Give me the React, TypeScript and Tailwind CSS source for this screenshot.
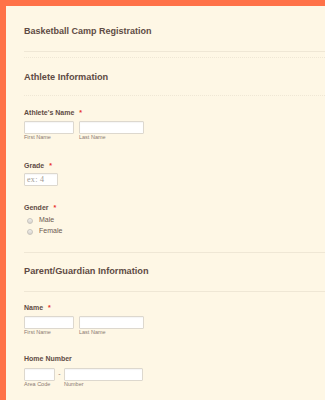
import React from "react";

const font = { fontFamily: '"Liberation Sans", Arial, sans-serif' };

function Req() {
  return <span className="ml-[5px] text-[7px] text-[#e8322a]">*</span>;
}

function Label({ text, required }: { text: string; required?: boolean }) {
  return (
    <div className="flex items-start text-[7px] leading-[9px] font-bold text-[#5e4b44]">
      {text}
      {required && <Req />}
    </div>
  );
}

function Field({ width, placeholder }: { width: string; placeholder?: string }) {
  return (
    <div
      className={`${width} h-[13px] bg-white border border-[#ddd8ce] rounded-[1px] shadow-[inset_0_1px_1px_rgba(0,0,0,0.04)] flex items-center pl-[2px] text-[8px] tracking-[0.3px] text-[#a29b93]`}
      style={{ fontFamily: '"Liberation Serif", serif' }}
    >
      {placeholder}
    </div>
  );
}

function Sub({ children, width }: { children: string; width: string }) {
  return <div className={`${width} text-[5.5px] leading-[7px] text-[#8c7b72]`}>{children}</div>;
}

function NamePair() {
  return (
    <div className="mt-[4px]">
      <div className="flex gap-[5px]">
        <Field width="w-[50px]" />
        <Field width="w-[65px]" />
      </div>
      <div className="flex gap-[5px]">
        <Sub width="w-[50px]">First Name</Sub>
        <Sub width="w-[65px]">Last Name</Sub>
      </div>
    </div>
  );
}

function Radio({ label }: { label: string }) {
  return (
    <div className="h-[11px] flex items-center">
      <span className="ml-[3px] w-[6px] h-[6px] rounded-full border border-[#c9c5be] bg-gradient-to-b from-[#f2f0ec] to-[#d6d3ce]" />
      <span className="ml-[6px] text-[7px] text-[#6b5750]">{label}</span>
    </div>
  );
}

export default function App() {
  return (
    <div className="min-h-[400px] bg-[#ff7248] pt-[6px] pl-[6px]" style={font}>
      <div className="min-h-[394px] bg-[#fef7e5] pl-[18px]">
        <div className="pt-[20px] pb-[14px] border-b border-[#efe7d5]">
          <div className="text-[9px] leading-[11px] font-bold text-[#5e4b44]">Basketball Camp Registration</div>
        </div>
        <div className="mt-[5px] border-t border-dotted border-[#efe7d5] pt-[13px] pb-[12px] border-b">
          <div className="text-[9.2px] leading-[12px] font-bold text-[#5e4b44]">Athlete Information</div>
        </div>

        <div className="pt-[12px]">
          <Label text="Athlete's Name" required />
          <NamePair />
        </div>

        <div className="mt-[20px]">
          <Label text="Grade" required />
          <div className="mt-[3px]">
            <Field width="w-[34px]" placeholder="ex: 4" />
          </div>
        </div>

        <div className="mt-[17px] pb-[15px] border-b border-[#efe7d5]">
          <Label text="Gender" required />
          <div className="mt-[3px]">
            <Radio label="Male" />
            <Radio label="Female" />
          </div>
        </div>

        <div className="pt-[12px] pb-[14px] border-b border-[#efe7d5]">
          <div className="text-[9.2px] leading-[12px] font-bold text-[#5e4b44]">Parent/Guardian Information</div>
        </div>

        <div className="pt-[11px]">
          <Label text="Name" required />
          <NamePair />
        </div>

        <div className="mt-[18px]">
          <Label text="Home Number" />
          <div className="mt-[5px] flex items-center">
            <Field width="w-[31px]" />
            <span className="w-[9px] text-center text-[7px] text-[#8c7b72]">-</span>
            <Field width="w-[79px]" />
          </div>
          <div className="flex">
            <Sub width="w-[40px]">Area Code</Sub>
            <Sub width="w-[79px]">Number</Sub>
          </div>
        </div>
      </div>
    </div>
  );
}
